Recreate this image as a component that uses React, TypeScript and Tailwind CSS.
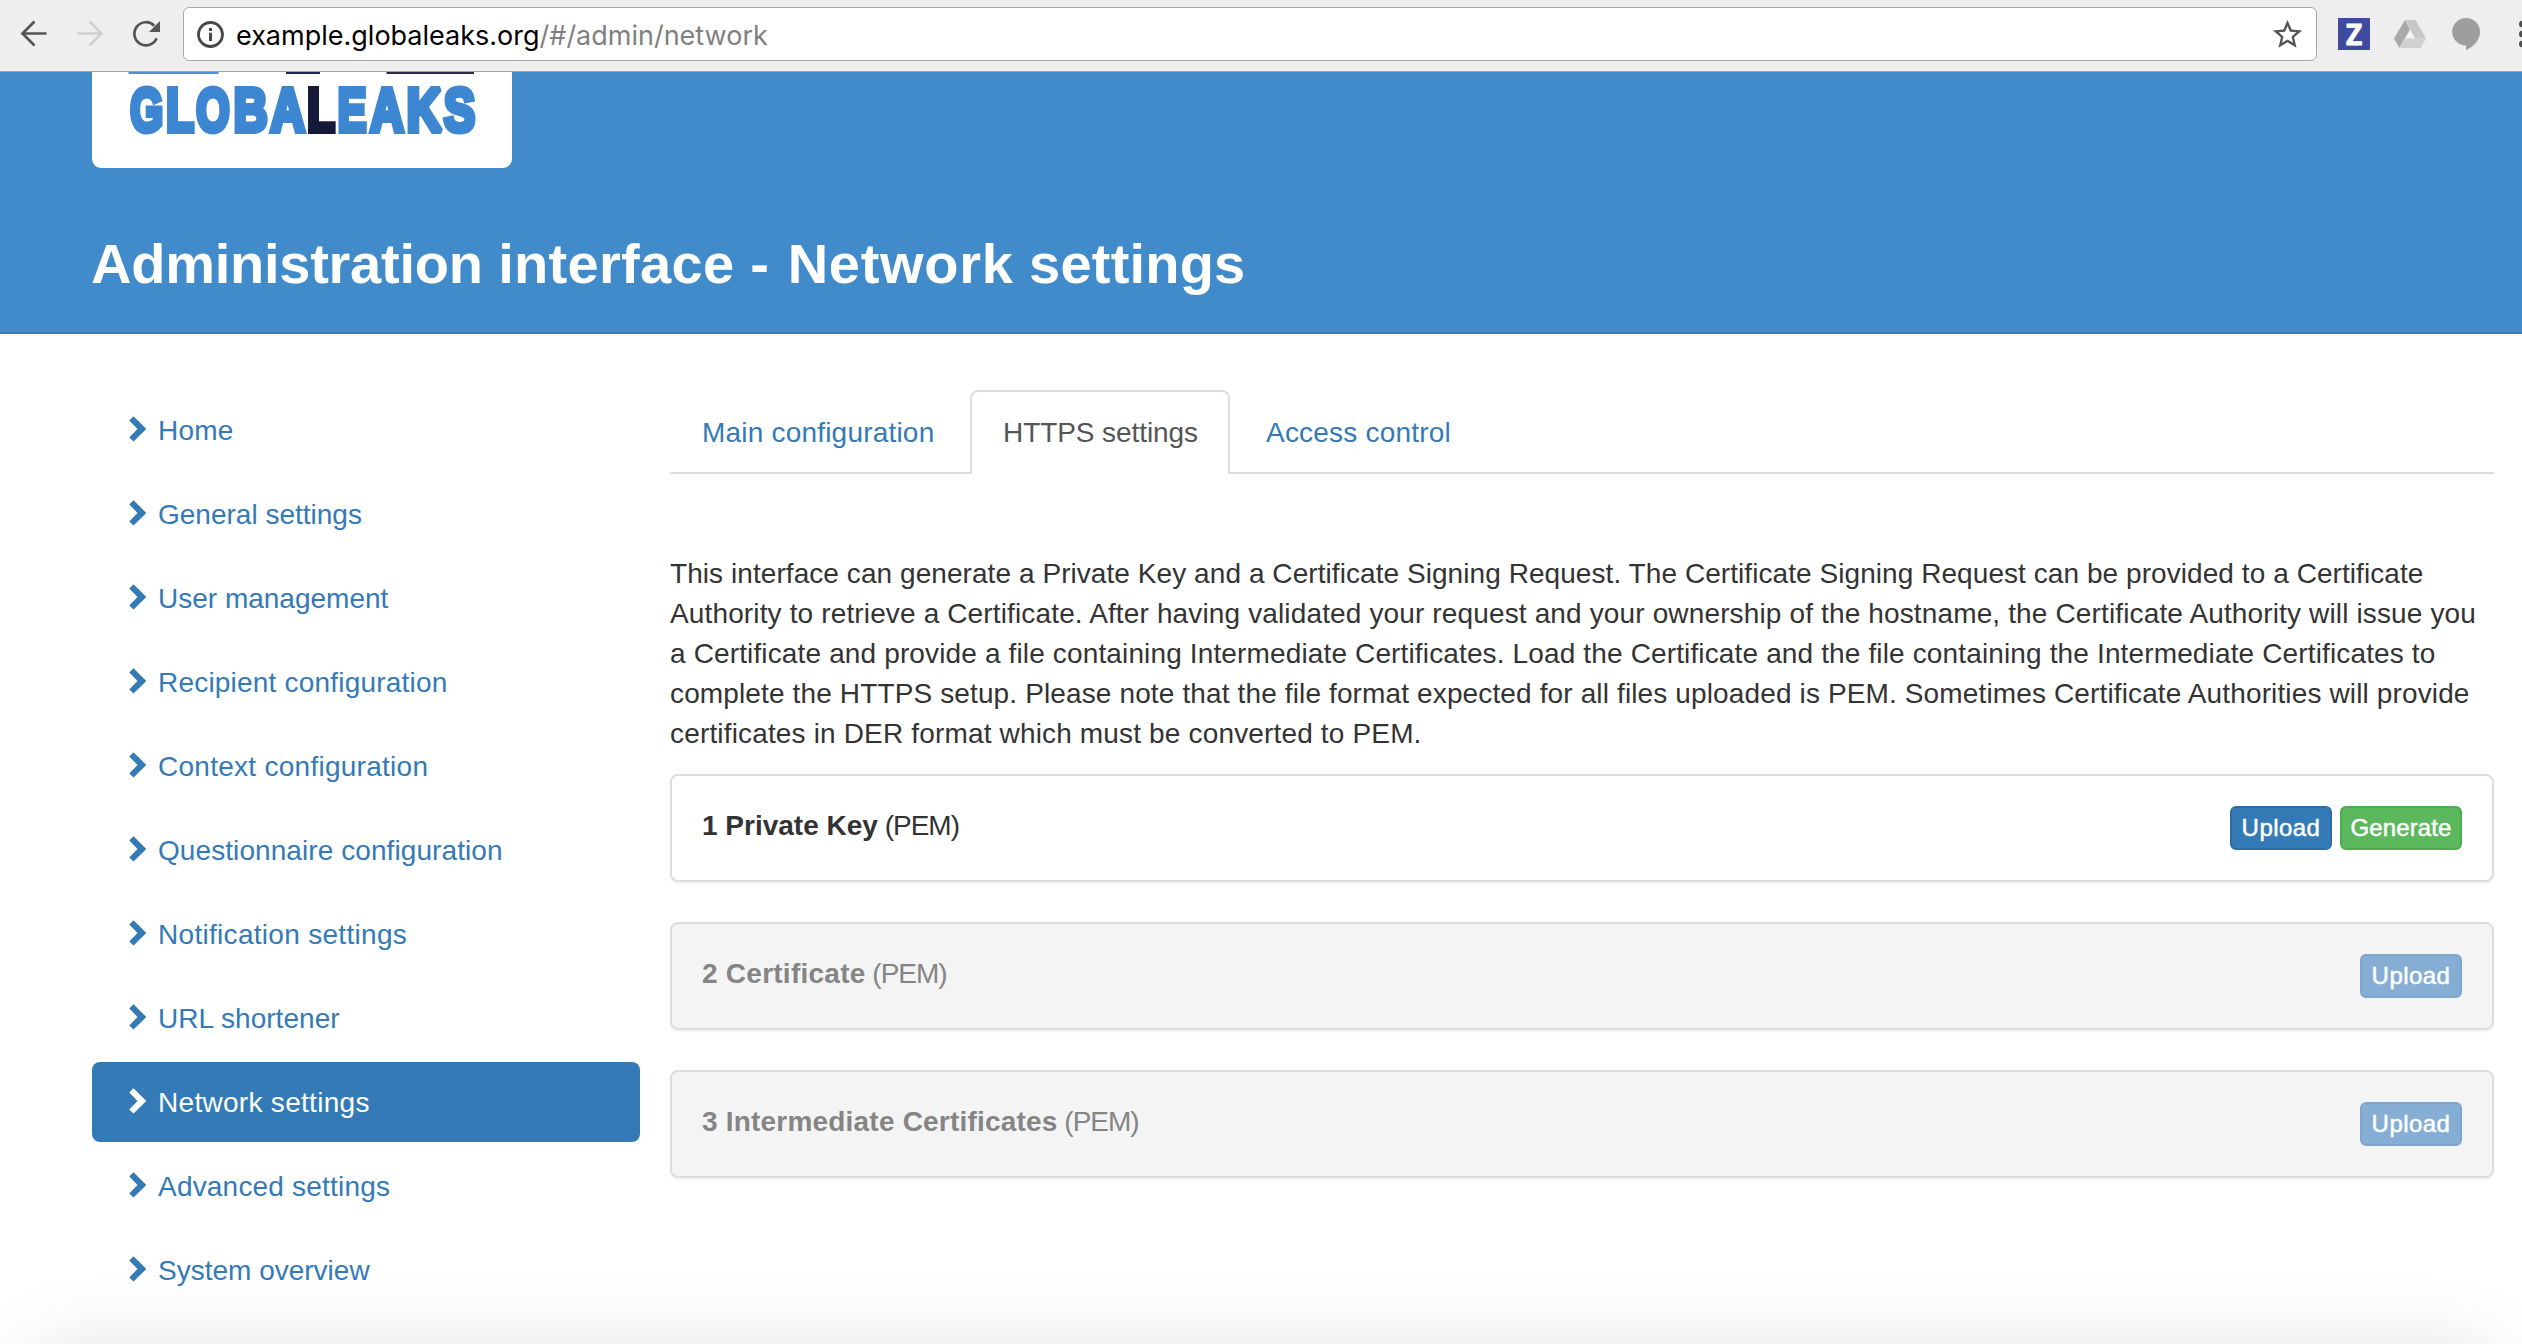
import React from "react";

const NAV: { label: string; tracking: string; active?: boolean }[] = [
  { label: "Home", tracking: "tracking-[0.2px]" },
  { label: "General settings", tracking: "" },
  { label: "User management", tracking: "" },
  { label: "Recipient configuration", tracking: "tracking-[0.2px]" },
  { label: "Context configuration", tracking: "tracking-[0.27px]" },
  { label: "Questionnaire configuration", tracking: "tracking-[0.08px]" },
  { label: "Notification settings", tracking: "tracking-[0.3px]" },
  { label: "URL shortener", tracking: "tracking-[0.05px]" },
  { label: "Network settings", tracking: "tracking-[0.3px]", active: true },
  { label: "Advanced settings", tracking: "tracking-[0.2px]" },
  { label: "System overview", tracking: "" },
];

const INTRO: { text: string; tracking: string }[] = [
  {
    text: "This interface can generate a Private Key and a Certificate Signing Request. The Certificate Signing Request can be provided to a Certificate",
    tracking: "tracking-[0.065px]",
  },
  {
    text: "Authority to retrieve a Certificate. After having validated your request and your ownership of the hostname, the Certificate Authority will issue you",
    tracking: "tracking-[0.14px]",
  },
  {
    text: "a Certificate and provide a file containing Intermediate Certificates. Load the Certificate and the file containing the Intermediate Certificates to",
    tracking: "tracking-[0.14px]",
  },
  {
    text: "complete the HTTPS setup. Please note that the file format expected for all files uploaded is PEM. Sometimes Certificate Authorities will provide",
    tracking: "tracking-[0.132px]",
  },
  {
    text: "certificates in DER format which must be converted to PEM.",
    tracking: "tracking-[0.16px]",
  },
];

/* Wordmark letters: left edge, drawn width, and the glyph's own bearing and ink width in em. */
const WORDMARK: { ch: string; x: number; w: number; lsb: number; ink: number; dark?: boolean }[] = [
  { ch: "G", x: 130, w: 32.5, lsb: 0.041, ink: 0.672 },
  { ch: "L", x: 167, w: 27.5, lsb: 0.067, ink: 0.51 },
  { ch: "O", x: 196, w: 34, lsb: 0.041, ink: 0.695 },
  { ch: "B", x: 234.5, w: 33, lsb: 0.067, ink: 0.607 },
  { ch: "A", x: 268.5, w: 38, lsb: 0.01, ink: 0.7 },
  { ch: "L", x: 308, w: 27.5, lsb: 0.067, ink: 0.51, dark: true },
  { ch: "E", x: 338.5, w: 28.5, lsb: 0.067, ink: 0.566 },
  { ch: "A", x: 368.5, w: 37, lsb: 0.01, ink: 0.7 },
  { ch: "K", x: 407.5, w: 36, lsb: 0.067, ink: 0.65 },
  { ch: "S", x: 443, w: 32.5, lsb: 0.03, ink: 0.6 },
];

function Logo() {
  const size = 60.5;
  const stroke = 6;
  return (
    <div className="h-24 w-[420px] rounded-b-[9px] bg-white">
      <svg width="420" height="96" viewBox="92 72 420 96" className="block">
        <rect x="128.5" y="72" width="90" height="2" fill="#4894dc" />
        <rect x="286" y="72" width="34" height="2" fill="#1d2b52" />
        <rect x="386.5" y="72" width="87.5" height="2" fill="#2a2b4b" />
        {WORDMARK.map((g, i) => {
          const sx = g.w / (g.ink * size + stroke);
          const tx = g.x - (g.lsb * size - stroke / 2) * sx;
          const color = g.dark ? "#15193a" : "#3d86d2";
          return (
            <text
              key={i}
              transform={`translate(${tx} 130.8) scale(${sx} 1)`}
              fontFamily="Liberation Sans, Arial, sans-serif"
              fontWeight="700"
              fontSize={size}
              fill={color}
              stroke={color}
              strokeWidth={stroke}
              strokeMiterlimit="2"
            >
              {g.ch}
            </text>
          );
        })}
      </svg>
    </div>
  );
}

function BrowserBar() {
  return (
    <div className="flex h-[72px] items-start border-b border-[#a3a3a3] bg-[#eeeeee]">
      <svg width="183" height="71" viewBox="0 0 183 71" fill="none" className="shrink-0">
        <path d="M46.500 33.500H23M34.500 21.500L22.500 33.500L34.500 45.500" stroke="#555555" strokeWidth="2.700" />
        <path d="M77.500 33.500H101M89.500 21.500L101.500 33.500L89.500 45.500" stroke="#d0d0d0" strokeWidth="2.700" />
        <path d="M156.700 38.300A11.600 11.600 0 1 1 154.300 25.700" stroke="#555555" strokeWidth="2.700" />
        <path d="M160 21V32H149Z" fill="#555555" />
      </svg>
      <div className="mt-[7px] flex h-[54px] w-[2134px] shrink-0 items-center rounded-[6px] border border-[#a9a9a9] bg-white pr-[11px] pl-3">
        <svg width="29" height="29" viewBox="0 0 29 29" fill="none">
          <circle cx="14.500" cy="14.500" r="12" stroke="#484848" strokeWidth="2.800" />
          <rect x="13" y="8" width="3" height="3" fill="#484848" />
          <rect x="13" y="12.700" width="3" height="8.300" fill="#484848" />
        </svg>
        <div className="ml-[11px] flex-1 pt-[3px] font-[Inter,sans-serif] text-[27px] leading-[48px] whitespace-nowrap text-black">
          example.globaleaks.org<span className="text-[#808080]">/#/admin/network</span>
        </div>
        <svg width="35" height="35" viewBox="0 0 24 24" fill="#555555">
          <path d="M22 9.24l-7.19-.62L12 2 9.190 8.630 2 9.240l5.460 4.730L5.820 21 12 17.270 18.180 21l-1.630-7.030L22 9.240zM12 15.400l-3.760 2.270 1-4.280-3.320-2.880 4.380-.38L12 6.100l1.710 4.040 4.380.38-3.320 2.880 1 4.280L12 15.400z" />
        </svg>
      </div>
      <div className="mt-[18px] ml-[21px] flex size-8 shrink-0 items-center justify-center bg-[#3f4b9c] font-['Open_Sans',sans-serif] text-[28px] leading-8 font-bold text-white [-webkit-text-stroke:0.8px_white]">
        Z
      </div>
      <svg width="32" height="28" viewBox="0 0 32 28" className="mt-5 ml-6 shrink-0">
        <path d="M11 0L0 18.500L5.300 28L16 9.500Z" fill="#a9a9a9" />
        <path d="M11 0H21.500L32 18.500H21.300Z" fill="#c6c6c6" />
        <path d="M5.300 28L10.800 18.500H32L26.700 28Z" fill="#d0d0d0" />
        <path d="M16.200 10.500L20.500 18H12Z" fill="#f4f4f4" />
      </svg>
      <svg width="28" height="32" viewBox="0 0 28 32" fill="#9e9e9e" className="mt-[18px] ml-[26px] shrink-0">
        <path d="M14 0A14 14 0 0 1 28 14C28 22 21.500 29 14 32V27.600A13.800 13.800 0 0 1 14 0Z" />
      </svg>
      <svg width="3" height="28" viewBox="0 0 3 28" fill="#4f4f4f" className="mt-5 ml-[39px] shrink-0">
        <circle cx="3.300" cy="4" r="3.300" />
        <circle cx="3.300" cy="14" r="3.300" />
        <circle cx="3.300" cy="24" r="3.300" />
      </svg>
    </div>
  );
}

function SidebarItem({ label, tracking, active }: { label: string; tracking: string; active?: boolean }) {
  return (
    <li
      className={
        active
          ? "flex h-20 items-center rounded-lg bg-[#337ab7] pl-[37px] text-white"
          : "flex h-20 items-center pl-[37px] text-[#337ab7]"
      }
    >
      <svg width="18" height="26" viewBox="0 0 18 26" fill="currentColor" className="mb-[3px] shrink-0">
        <path d="M0.300 4.400L4.500 0.300L17.300 13L4.500 25.600L0.300 21.500L8.500 13Z" />
      </svg>
      <span className={`ml-[11px] pt-px ${tracking}`}>{label}</span>
    </li>
  );
}

function Button({ label, kind }: { label: string; kind: "primary" | "success" | "disabled" }) {
  const style = {
    primary: "w-[102px] bg-[#337ab7] border-[#2e6da4] tracking-[0.45px]",
    success: "w-[122px] bg-[#5cb85c] border-[#4cae4c] tracking-[0.1px]",
    disabled: "w-[102px] bg-[#86aed5] border-[#7fa6cc] tracking-[0.45px]",
  }[kind];
  return (
    <button
      className={`h-11 rounded-md border-2 text-center text-2xl leading-9 text-white [-webkit-text-stroke:0.5px_white] ${style}`}
    >
      {label}
    </button>
  );
}

function Card({
  title,
  tracking,
  disabled,
  children,
}: {
  title: string;
  tracking: string;
  disabled?: boolean;
  children: React.ReactNode;
}) {
  return (
    <section
      className={`flex h-[108px] items-start justify-between rounded-lg border-2 border-[#dddddd] pt-[30px] pr-[30px] pl-[30px] shadow-[0_2px_2px_rgba(0,0,0,0.05)] ${
        disabled ? "bg-[#f4f4f4] text-[#858585]" : "bg-white text-[#333333]"
      }`}
    >
      <div className="leading-10">
        <b className={tracking}>{title}</b> <span className="-ml-px tracking-[-1px]">(PEM)</span>
      </div>
      <div className="flex gap-2">{children}</div>
    </section>
  );
}

export default function App() {
  return (
    <div className="relative h-[1344px] w-[2522px] overflow-hidden bg-white font-['Liberation_Sans',Arial,sans-serif] text-[28px] leading-10 text-[#333333]">
      <BrowserBar />
      <header className="h-[262px] border-b-2 border-[#357ebd] bg-[#428bca] pl-[92px]">
        <Logo />
        <h1 className="mt-16 -ml-px text-[56px] leading-[64px] font-bold whitespace-nowrap text-white">
          <span className="tracking-[-0.25px]">Administration</span>{" "}
          <span className="tracking-[0.3px]">interface -</span>{" "}
          <span className="ml-[3px] tracking-[0.7px]">Network</span>{" "}
          <span className="tracking-[0.2px]">settings</span>
        </h1>
      </header>
      <div className="flex pt-14 pl-[92px]">
        <ul className="mr-[30px] flex w-[548px] shrink-0 flex-col gap-1">
          {NAV.map((n) => (
            <SidebarItem key={n.label} {...n} />
          ))}
        </ul>
        <main className="w-[1824px] shrink-0">
          <nav className="flex h-[84px] leading-10">
            <div className="w-[300px] border-b-2 border-[#dddddd] pt-[23px] pl-8 tracking-[0.2px] text-[#337ab7]">
              Main configuration
            </div>
            <div className="w-[260px] rounded-t-lg border-2 border-b-0 border-[#dddddd] pt-[21px] pl-[31px] tracking-[-0.08px] whitespace-nowrap text-[#555555]">
              HTTPS settings
            </div>
            <div className="flex-1 border-b-2 border-[#dddddd] pt-[23px] pl-9 tracking-[0.2px] text-[#337ab7]">
              Access control
            </div>
          </nav>
          <p className="mt-20 whitespace-nowrap">
            {INTRO.map((l) => (
              <span key={l.text} className={`block ${l.tracking}`}>
                {l.text}
              </span>
            ))}
          </p>
          <div className="mt-5 flex flex-col gap-10">
            <Card title="1 Private Key" tracking="">
              <Button label="Upload" kind="primary" />
              <Button label="Generate" kind="success" />
            </Card>
            <Card title="2 Certificate" tracking="tracking-[0.25px]" disabled>
              <Button label="Upload" kind="disabled" />
            </Card>
            <Card title="3 Intermediate Certificates" tracking="tracking-[0.2px]" disabled>
              <Button label="Upload" kind="disabled" />
            </Card>
          </div>
        </main>
      </div>
      <div className="pointer-events-none absolute top-[1350px] right-8 left-9 h-40 shadow-[0_0_80px_rgba(0,0,0,0.13)]" />
    </div>
  );
}
